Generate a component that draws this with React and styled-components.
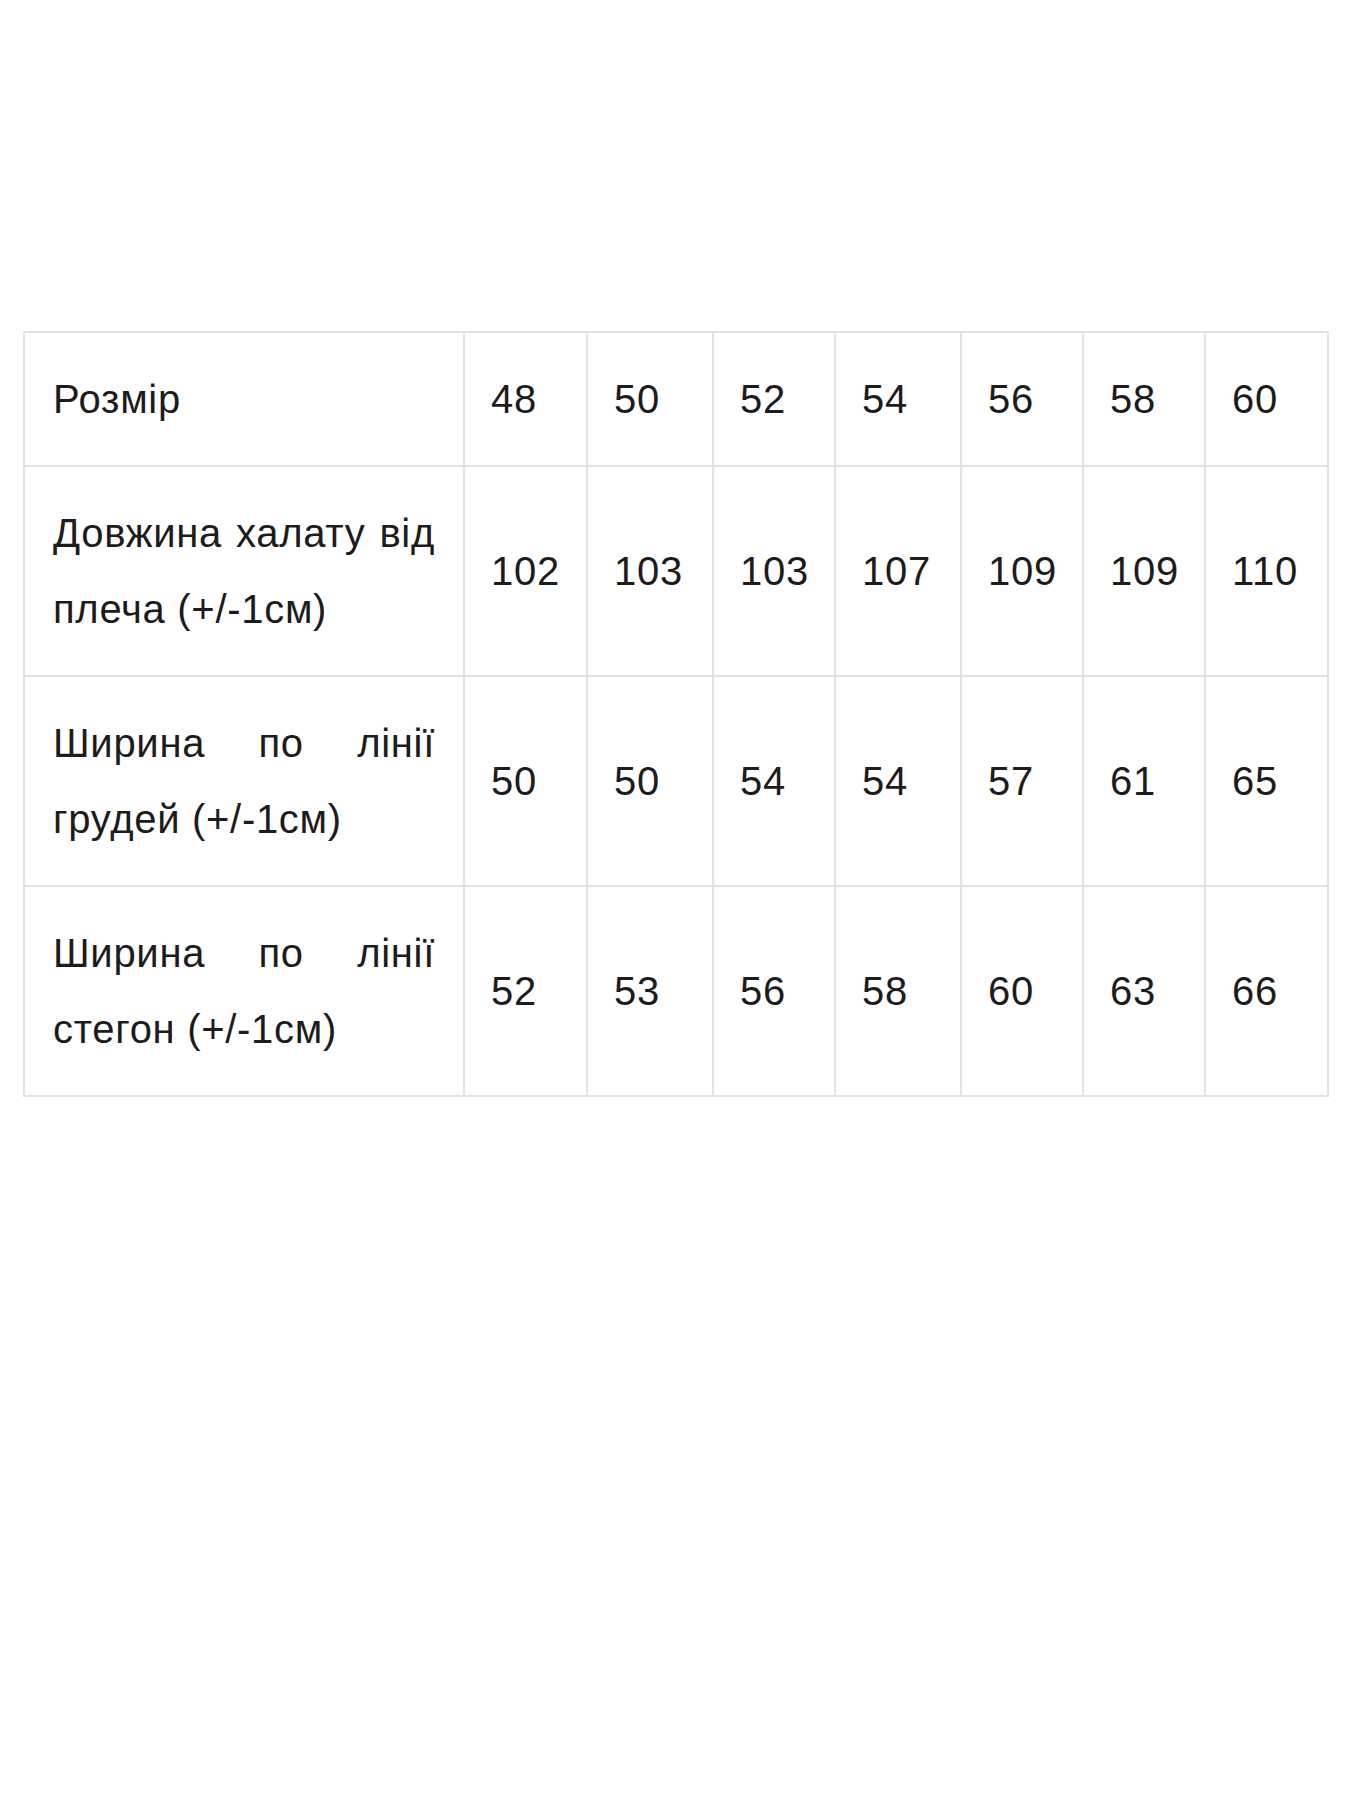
import React from 'react';
import styled, { createGlobalStyle } from 'styled-components';

const GlobalStyle = createGlobalStyle`
  html, body {
    margin: 0;
    padding: 0;
    background: #ffffff;
  }
  body {
    font-family: "Liberation Sans", Arial, sans-serif;
  }
`;

const Page = styled.div`
  width: 1350px;
  min-height: 1800px;
  padding: 331px 0 0 23px;
  box-sizing: border-box;
`;

const SizeTable = styled.table`
  width: 1306px;
  border-collapse: collapse;
  table-layout: fixed;
  font-family: "Liberation Sans", Arial, sans-serif;
  font-size: 40px;
  letter-spacing: 0.7px;
  line-height: 76px;
  color: #1c1c1c;
`;

const Cell = styled.td`
  border: 2px solid #e2e2e2;
  padding: 28px ${props => (props.label ? '28px' : '26px')};
  vertical-align: middle;
  text-align: ${props => (props.label ? 'justify' : 'left')};
`;

const widths = [440, 123, 126, 122, 126, 122, 122, 123];

const rows = [
  { label: 'Розмір', values: [48, 50, 52, 54, 56, 58, 60] },
  { label: 'Довжина халату від плеча (+/-1см)', values: [102, 103, 103, 107, 109, 109, 110] },
  { label: 'Ширина по лінії грудей (+/-1см)', values: [50, 50, 54, 54, 57, 61, 65] },
  { label: 'Ширина по лінії стегон (+/-1см)', values: [52, 53, 56, 58, 60, 63, 66] },
];

const App = () => (
  <>
    <GlobalStyle />
    <Page>
      <SizeTable>
        <colgroup>
          {widths.map((w, i) => (
            <col key={i} style={{ width: `${w}px` }} />
          ))}
        </colgroup>
        <tbody>
          {rows.map(row => (
            <tr key={row.label}>
              <Cell label>{row.label}</Cell>
              {row.values.map((v, i) => (
                <Cell key={i}>{v}</Cell>
              ))}
            </tr>
          ))}
        </tbody>
      </SizeTable>
    </Page>
  </>
);

export default App;
